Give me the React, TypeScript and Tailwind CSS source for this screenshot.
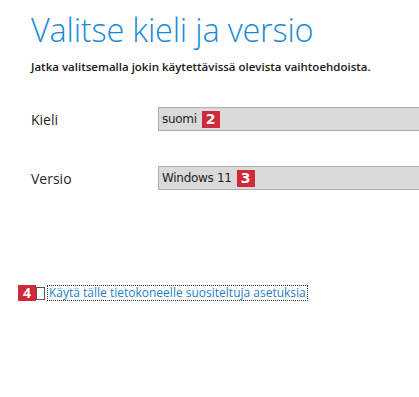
import React from "react";

const Badge = ({ n }: { n: string }) => (
  <span className="inline-flex h-[17px] w-[18px] shrink-0 items-center justify-center bg-[#d1283a] text-[14px] font-bold leading-none text-white">
    {n}
  </span>
);

export default function App() {
  return (
    <div className="relative h-[397px] w-[419px] overflow-hidden bg-white font-['Open_Sans',sans-serif]">
      <div className="pl-[31px] pt-[8px]">
        <h1 className="text-[32.5px] font-light leading-[44px] tracking-[-0.2px] text-[#1b8ad6]">
          Valitse kieli ja versio
        </h1>
        <p className="mt-[8px] text-[11.5px] font-semibold leading-[14px] text-[#1a1a1a]">
          Jatka valitsemalla jokin käytettävissä olevista vaihtoehdoista.
        </p>
      </div>

      <div className="mt-[33px] flex flex-col gap-[35px]">
        <div className="flex items-center">
          <div className="w-[158px] shrink-0 pl-[31px] text-[14px] leading-[23px] text-[#262626]">Kieli</div>
          <div className="flex h-[24px] w-[300px] shrink-0 items-center gap-[5px] border border-[#adadad] bg-[#dadada] pl-[3px] font-['DejaVu_Sans',sans-serif] text-[12px] text-[#222]">
            <span className="tracking-[-0.3px]">suomi</span>
            <Badge n="2" />
          </div>
        </div>
        <div className="flex items-center">
          <div className="w-[158px] shrink-0 pl-[31px] text-[14px] leading-[23px] text-[#262626]">Versio</div>
          <div className="flex h-[24px] w-[300px] shrink-0 items-center gap-[5px] border border-[#adadad] bg-[#dadada] pl-[3px] font-['DejaVu_Sans',sans-serif] text-[12px] text-[#222]">
            <span className="tracking-[-0.3px]">Windows 11</span>
            <Badge n="3" />
          </div>
        </div>
      </div>

      <div className="mt-[95px] flex items-center pl-[18px]">
        <span className="inline-flex h-[16px] w-[18px] items-center justify-center bg-[#d1283a] text-[14px] font-bold leading-none text-white">
          4
        </span>
        <span className="h-[13px] w-[9px] border border-[#555] bg-white" />
        <span className="ml-[2px] border border-dotted border-[#333] px-[1px] text-[12px] font-normal leading-[14px] text-[#1e7fc6]">
          Käytä tälle tietokoneelle suositeltuja asetuksia
        </span>
      </div>
    </div>
  );
}
